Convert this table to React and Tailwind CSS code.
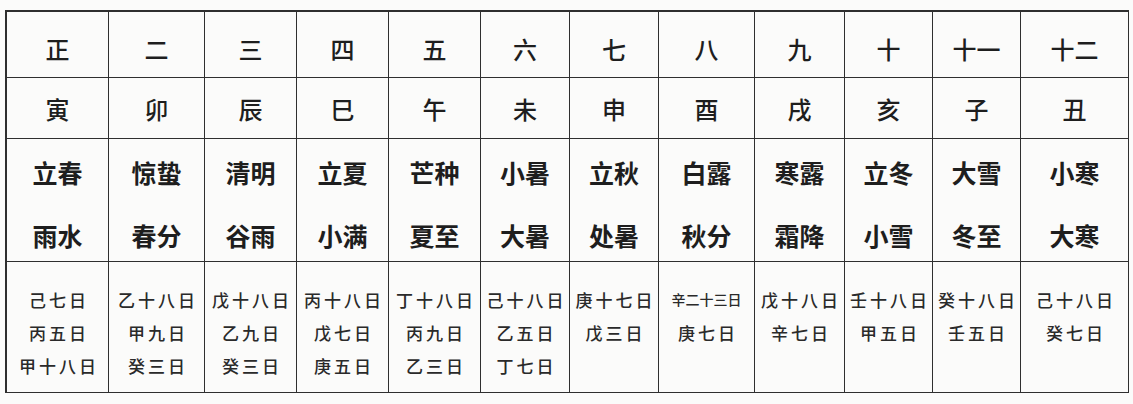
import React from 'react';

const months = ['正', '二', '三', '四', '五', '六', '七', '八', '九', '十', '十一', '十二'];
const branches = ['寅', '卯', '辰', '巳', '午', '未', '申', '酉', '戌', '亥', '子', '丑'];
const terms = [
  ['立春', '雨水'],
  ['惊蛰', '春分'],
  ['清明', '谷雨'],
  ['立夏', '小满'],
  ['芒种', '夏至'],
  ['小暑', '大暑'],
  ['立秋', '处暑'],
  ['白露', '秋分'],
  ['寒露', '霜降'],
  ['立冬', '小雪'],
  ['大雪', '冬至'],
  ['小寒', '大寒'],
];
const days = [
  ['己七日', '丙五日', '甲十八日'],
  ['乙十八日', '甲九日', '癸三日'],
  ['戊十八日', '乙九日', '癸三日'],
  ['丙十八日', '戊七日', '庚五日'],
  ['丁十八日', '丙九日', '乙三日'],
  ['己十八日', '乙五日', '丁七日'],
  ['庚十七日', '戊三日'],
  ['辛二十三日', '庚七日'],
  ['戊十八日', '辛七日'],
  ['壬十八日', '甲五日'],
  ['癸十八日', '壬五日'],
  ['己十八日', '癸七日'],
];

const cell = 'border-r-[1.5px] border-b-[1.5px] border-[#2f2f2f] flex';

const App = () => {
  return (
    <div
      className="w-[1133px] h-[404px] bg-[#fbfbfa] text-[#1e1e1e] pt-[10px] pl-[5px]"
      style={{ fontFamily: '"Noto Sans CJK SC", "Noto Sans", sans-serif' }}
    >
      <div className="inline-grid grid-cols-[102px_96px_92px_92px_92px_89px_89px_96px_90px_88px_88px_108px] grid-rows-[66px_61px_123px_131px] border-l-[2px] border-t-[2px] border-[#2f2f2f]">
        {/* 月份 */}
        {months.map((m) => (
          <div key={m} className={`${cell} items-center justify-center pt-[9px] text-[24px] leading-none font-medium`}>
            {m}
          </div>
        ))}

        {/* 地支 */}
        {branches.map((b) => (
          <div key={b} className={`${cell} items-center justify-center pt-[2px] text-[24px] leading-none font-medium`}>
            {b}
          </div>
        ))}

        {/* 节气 */}
        {terms.map(([a, b]) => (
          <div key={a} className={`${cell} flex-col items-center pt-[18px] gap-[33px] text-[25px] leading-[30px] font-bold`}>
            <span>{a}</span>
            <span>{b}</span>
          </div>
        ))}

        {/* 用事日 */}
        {days.map((list, i) => (
          <div key={i} className={`${cell} flex-col items-center pt-[21px] text-[#2a2a2a] leading-[33px] font-medium`}>
            {list.map((d) => (
              <span
                key={d}
                className={
                  d.length > 4
                    ? 'text-[14px] tracking-[0px]'
                    : 'text-[17px] tracking-[3px] pl-[3px]'
                }
              >
                {d}
              </span>
            ))}
          </div>
        ))}
      </div>
    </div>
  );
};

export default App;
